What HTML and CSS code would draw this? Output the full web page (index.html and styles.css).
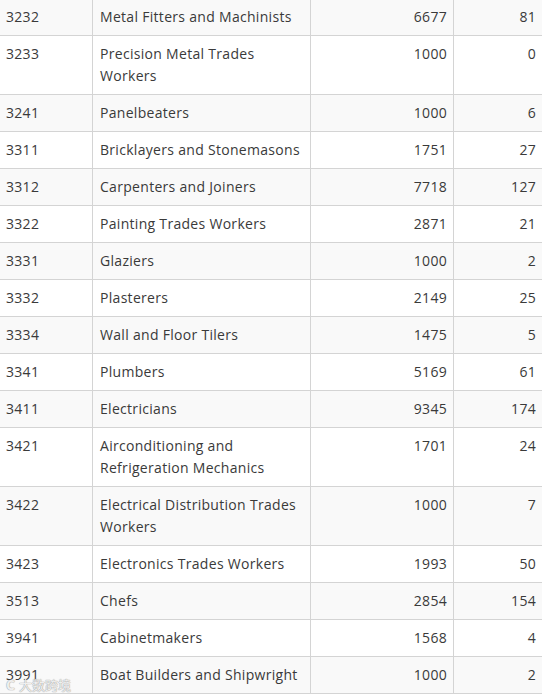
FILE: index.html
```html
<!DOCTYPE html>
<html>
<head>
<meta charset="utf-8">
<link rel="stylesheet" href="styles.css">
</head>
<body>
<table class="data">
  <tbody>
    <tr><td class="c1">3232</td><td class="c2">Metal Fitters and Machinists</td><td class="c3 num">6677</td><td class="c4 num">81</td></tr>
    <tr><td>3233</td><td>Precision Metal Trades Workers</td><td class="num">1000</td><td class="num">0</td></tr>
    <tr><td>3241</td><td>Panelbeaters</td><td class="num">1000</td><td class="num">6</td></tr>
    <tr><td>3311</td><td>Bricklayers and Stonemasons</td><td class="num">1751</td><td class="num">27</td></tr>
    <tr><td>3312</td><td>Carpenters and Joiners</td><td class="num">7718</td><td class="num">127</td></tr>
    <tr><td>3322</td><td>Painting Trades Workers</td><td class="num">2871</td><td class="num">21</td></tr>
    <tr><td>3331</td><td>Glaziers</td><td class="num">1000</td><td class="num">2</td></tr>
    <tr><td>3332</td><td>Plasterers</td><td class="num">2149</td><td class="num">25</td></tr>
    <tr><td>3334</td><td>Wall and Floor Tilers</td><td class="num">1475</td><td class="num">5</td></tr>
    <tr><td>3341</td><td>Plumbers</td><td class="num">5169</td><td class="num">61</td></tr>
    <tr><td>3411</td><td>Electricians</td><td class="num">9345</td><td class="num">174</td></tr>
    <tr><td>3421</td><td>Airconditioning and Refrigeration Mechanics</td><td class="num">1701</td><td class="num">24</td></tr>
    <tr><td>3422</td><td>Electrical Distribution Trades Workers</td><td class="num">1000</td><td class="num">7</td></tr>
    <tr><td>3423</td><td>Electronics Trades Workers</td><td class="num">1993</td><td class="num">50</td></tr>
    <tr><td>3513</td><td>Chefs</td><td class="num">2854</td><td class="num">154</td></tr>
    <tr><td>3941</td><td>Cabinetmakers</td><td class="num">1568</td><td class="num">4</td></tr>
    <tr><td>3991</td><td>Boat Builders and Shipwright</td><td class="num">1000</td><td class="num">2</td></tr>
  </tbody>
</table>
<div class="watermark"><span class="wm-logo">C</span><span class="wm-text">大数跨境</span></div>
</body>
</html>
```
FILE: styles.css
```css
html, body {
  margin: 0;
  padding: 0;
  background: #ffffff;
}
body {
  position: relative;
  font-family: "Open Sans", "Noto Sans", sans-serif;
  font-size: 14px;
  color: #3a3a3a;
}
.data {
  border-collapse: separate;
  border-spacing: 0;
  table-layout: fixed;
  width: 542px;
  margin-top: -1px;
}
.data td {
  box-sizing: border-box;
  padding: 7px 7px;
  line-height: 22px;
  letter-spacing: 0.3px;
  vertical-align: top;
  border-bottom: 1px solid #d4d4d4;
  text-align: left;
}
.data td:first-child {
  padding-left: 6px;
}
.data td + td {
  border-left: 1px solid #d4d4d4;
}
.data tr:nth-child(odd) td {
  background: #f9f9f9;
}
.data .c1 { width: 92px; }
.data .c2 { width: 218px; }
.data .c3 { width: 143px; }
.data .c4 { width: 89px; }
.data td.num {
  text-align: right;
  padding-right: 6px;
}
.watermark {
  position: absolute;
  left: 6px;
  top: 677px;
  display: flex;
  align-items: center;
  gap: 4px;
  color: rgba(255, 255, 255, 0.85);
  text-shadow: 0 0 1px #999, 0 0 1px #999;
  font-family: "Noto Sans CJK SC", sans-serif;
  font-size: 13px;
  line-height: 16px;
  pointer-events: none;
}
.wm-logo {
  font-family: "Open Sans", sans-serif;
  font-weight: bold;
  font-size: 14px;
}
```
